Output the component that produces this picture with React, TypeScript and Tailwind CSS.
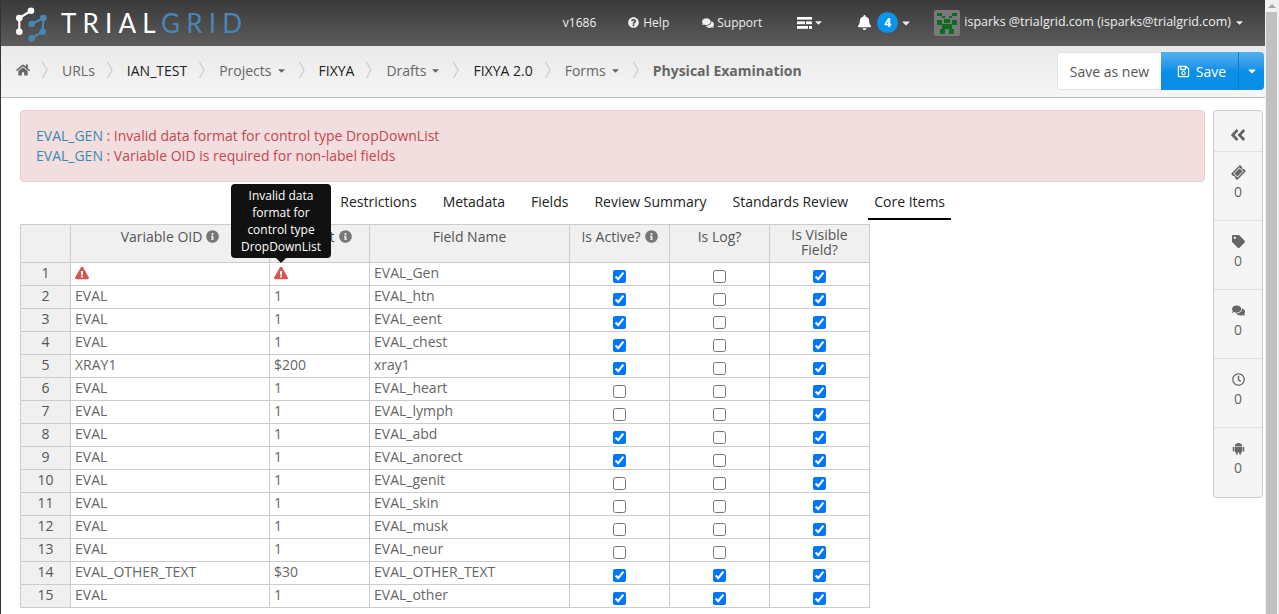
import React from "react";
import { FaHome, FaQuestionCircle, FaComments, FaBell, FaCaretDown, FaRegSave, FaAngleDoubleLeft, FaTicketAlt, FaTag, FaRegClock, FaInfoCircle, FaExclamationTriangle } from "react-icons/fa";

const Sep = () => (
  <svg width="6" height="18" viewBox="0 0 6 18" className="mx-[12px] shrink-0" aria-hidden="true">
    <polyline points="0.5,1 5,9 0.5,17" fill="none" stroke="#cfcfcf" strokeWidth="1.4" />
  </svg>
);

const Logo = () => (
  <svg width="32" height="38" viewBox="0 0 32 38" className="shrink-0" aria-hidden="true">
    <g transform="translate(-16,0)">
      <polyline points="31,6.7 19.3,14 19.3,27.7" fill="none" stroke="#fff" strokeWidth="2.2" />
      <circle cx="31" cy="6.7" r="3.3" fill="#fff" />
      <circle cx="19.3" cy="14" r="3.3" fill="#fff" />
      <circle cx="19.3" cy="27.7" r="3.3" fill="#fff" />
      <polyline points="31.7,20 43.3,14 42.7,27.7 31.7,34.3" fill="none" stroke="#4a86b4" strokeWidth="2.2" />
      <circle cx="43.3" cy="14" r="3.3" fill="#4a86b4" />
      <circle cx="31.7" cy="20" r="3.3" fill="#4a86b4" />
      <circle cx="42.7" cy="27.7" r="3.3" fill="#4a86b4" />
      <circle cx="31.7" cy="34.3" r="3.3" fill="#4a86b4" />
    </g>
  </svg>
);

const Tasks = () => (
  <svg width="15" height="12" viewBox="0 0 15 12" aria-hidden="true">
    <rect x="0" y="0" width="15" height="2.6" fill="#fff" />
    <rect x="0" y="4.4" width="8" height="2.8" fill="#fff" />
    <rect x="9" y="4.4" width="6" height="2.8" fill="#fff" />
    <rect x="0" y="9" width="11" height="2.8" fill="#fff" />
    <rect x="12" y="9" width="3" height="2.8" fill="#fff" />
  </svg>
);

const Avatar = () => (
  <svg width="26" height="26" viewBox="0 0 26 26" className="shrink-0 rounded-[2px]" aria-hidden="true">
    <rect width="26" height="26" fill="#7a7a7a" />
    <g fill="#0f6b1f">
      <rect x="3" y="3" width="5" height="3" />
      <rect x="18" y="3" width="5" height="3" />
      <rect x="8" y="6" width="3" height="2" />
      <rect x="15" y="6" width="3" height="2" />
      <rect x="3" y="10" width="5" height="5" />
      <rect x="18" y="10" width="5" height="5" />
      <rect x="10" y="9" width="6" height="4" />
      <rect x="8" y="14" width="10" height="5" />
      <rect x="6" y="19" width="5" height="5" />
      <rect x="15" y="19" width="5" height="5" />
    </g>
  </svg>
);

const Android = ({ className }: { className?: string }) => (
  <svg width="13" height="13" viewBox="0 0 14 14" className={className} fill="currentColor" aria-hidden="true">
    <path d="M3 4.6 C3 2.6 4.8 1 7 1 C9.2 1 11 2.6 11 4.6 Z" />
    <rect x="3" y="5.2" width="8" height="6" rx="0.6" />
    <rect x="0.8" y="5.2" width="1.6" height="5" rx="0.8" />
    <rect x="11.6" y="5.2" width="1.6" height="5" rx="0.8" />
    <rect x="4.4" y="10.5" width="1.7" height="3.2" rx="0.8" />
    <rect x="7.9" y="10.5" width="1.7" height="3.2" rx="0.8" />
  </svg>
);

const crumbs: { t: string; k: "link" | "dark" | "menu" }[] = [
  { t: "URLs", k: "link" },
  { t: "IAN_TEST", k: "dark" },
  { t: "Projects", k: "menu" },
  { t: "FIXYA", k: "dark" },
  { t: "Drafts", k: "menu" },
  { t: "FIXYA 2.0", k: "dark" },
  { t: "Forms", k: "menu" },
];

const rows: [string, string, string, boolean, boolean, boolean][] = [
  ["!", "!", "EVAL_Gen", true, false, true],
  ["EVAL", "1", "EVAL_htn", true, false, true],
  ["EVAL", "1", "EVAL_eent", true, false, true],
  ["EVAL", "1", "EVAL_chest", true, false, true],
  ["XRAY1", "$200", "xray1", true, false, true],
  ["EVAL", "1", "EVAL_heart", false, false, true],
  ["EVAL", "1", "EVAL_lymph", false, false, true],
  ["EVAL", "1", "EVAL_abd", true, false, true],
  ["EVAL", "1", "EVAL_anorect", true, false, true],
  ["EVAL", "1", "EVAL_genit", false, false, true],
  ["EVAL", "1", "EVAL_skin", false, false, true],
  ["EVAL", "1", "EVAL_musk", false, false, true],
  ["EVAL", "1", "EVAL_neur", false, false, true],
  ["EVAL_OTHER_TEXT", "$30", "EVAL_OTHER_TEXT", true, true, true],
  ["EVAL", "1", "EVAL_other", true, true, true],
];

const Warn = () => <FaExclamationTriangle className="text-[14px] text-[#d9534f]" />;
const Info = () => <FaInfoCircle className="inline-block text-[13px] text-[#777] ml-[4px] align-[-1px]" />;
const Check = ({ on }: { on: boolean }) => (
  <input type="checkbox" defaultChecked={on} className="block mx-auto mt-[5px] w-[13px] h-[13px]" />
);

const side = [FaTicketAlt, FaTag, FaComments, FaRegClock, Android];

export default function App() {
  return (
    <div className="flex w-[1279px] h-[614px] overflow-hidden bg-white text-[14px] text-[#333] font-['Open_Sans',sans-serif]">
      <div className="w-[1265px] shrink-0 flex flex-col border-l border-[#333] overflow-hidden">
        <header className="h-[46px] shrink-0 flex items-center justify-between pl-[15px] pr-[20px] bg-gradient-to-b from-[#3a3a3a] to-[#5c5c5c] text-[12px] text-[#eee]">
          <div className="flex items-center">
            <Logo />
            <span className="ml-[13px] text-[26px] leading-none font-normal tracking-[6.2px] font-['Lato',sans-serif]">
              <span className="text-white">TRIAL</span>
              <span className="text-[#4a86b4]">GRID</span>
            </span>
          </div>
          <div className="flex items-center mb-[1px]">
            <span>v1686</span>
            <span className="ml-[32px] flex items-center gap-[4px]"><FaQuestionCircle className="text-[11px]" />Help</span>
            <span className="ml-[33px] flex items-center gap-[3px]"><FaComments className="text-[12px]" />Support</span>
            <span className="ml-[35px] flex items-center gap-[1px]"><Tasks /><FaCaretDown className="text-[11px]" /></span>
            <span className="ml-[33px] flex items-center">
              <FaBell className="text-[15px] text-white" />
              <span className="ml-[5px] w-[21px] h-[21px] rounded-full bg-[#0a94ea] text-white font-bold text-[12px] flex items-center justify-center">4</span>
              <FaCaretDown className="ml-[2px] text-[12px]" />
            </span>
            <span className="ml-[22px] flex items-center">
              <Avatar />
              <span className="ml-[4px] text-[12.5px]">isparks @trialgrid.com (isparks@trialgrid.com)</span>
              <FaCaretDown className="ml-[3px] text-[11px]" />
            </span>
          </div>
        </header>

        <nav className="h-[52px] shrink-0 flex items-center justify-between pl-[15px] pr-[1px] border-b border-[#bbb] bg-gradient-to-b from-[#e9e9e9] to-[#f6f6f6]">
          <div className="flex items-center text-[#666] mb-[3px]">
            <FaHome className="text-[14px]" />
            {crumbs.map((c) => (
              <React.Fragment key={c.t}>
                <Sep />
                <span className={`flex items-center ml-[2px] ${c.k === "dark" ? "text-[#222]" : "text-[#666]"}`}>
                  {c.t}
                  {c.k === "menu" && <FaCaretDown className="ml-[4px] text-[11px]" />}
                </span>
              </React.Fragment>
            ))}
            <Sep />
            <span className="ml-[2px] font-bold">Physical Examination</span>
          </div>
          <div className="flex items-stretch h-[38px] -mt-[1px]">
            <span className="w-[104px] flex items-center justify-center bg-white border border-[#e4e4e4] border-r-0 rounded-l-[4px] text-[#555]">Save as new</span>
            <span className="w-[78px] pl-[4px] flex items-center justify-center gap-[6px] text-white bg-gradient-to-b from-[#52b0f0] to-[#0a8fe8] [background-size:100%_50%] bg-no-repeat bg-[#0a8fe8] border-r border-[#0a7cc9]">
              <FaRegSave className="text-[13px]" />Save
            </span>
            <span className="w-[25px] flex items-center justify-center text-white bg-gradient-to-b from-[#52b0f0] to-[#0a8fe8] [background-size:100%_50%] bg-no-repeat bg-[#0a8fe8] rounded-r-[4px]">
              <FaCaretDown className="text-[12px]" />
            </span>
          </div>
        </nav>

        <div className="flex-1 flex items-start pt-[12px] pl-[19px] min-h-0">
          <main className="w-[1185px] shrink-0">
            <div className="h-[72px] pl-[15px] pt-[15px] bg-[#f2dede] border border-[#ebccd1] rounded-[4px] leading-[20px] text-[#c4474f]">
              <div><span className="text-[#3a8bb0]">EVAL_GEN</span> : Invalid data format for control type DropDownList</div>
              <div><span className="text-[#3a8bb0]">EVAL_GEN</span> : Variable OID is required for non-label fields</div>
            </div>
            <div className="mt-[3px] mb-[4px] h-[35px] flex justify-center text-[#222]">
              {["Form", "Restrictions", "Metadata", "Fields", "Review Summary", "Standards Review", "Core Items"].map((t, i) => (
                <span key={t} className={`px-[6px] mx-[7px] h-[35px] flex items-center border-b-2 ${i === 6 ? "border-black" : "border-transparent"}`}>{t}</span>
              ))}
            </div>
            <table className="table-fixed border-collapse w-[849px] text-[#666] leading-[19px]">
              <colgroup>
                <col className="w-[50px]" />
                <col className="w-[199px]" />
                <col className="w-[100px]" />
                <col className="w-[200px]" />
                <col className="w-[100px]" />
                <col className="w-[100px]" />
                <col className="w-[100px]" />
              </colgroup>
              <thead>
                <tr className="h-[38px] bg-[#f0f0f0] text-[#555]">
                  <th className="border border-[#ccc] font-normal" />
                  <th className="border border-[#ccc] font-normal align-top pt-[2px]">Variable OID<Info /></th>
                  <th className="border border-[#ccc] font-normal align-top pt-[2px]">Format<Info /></th>
                  <th className="border border-[#ccc] font-normal align-top pt-[2px]">Field Name</th>
                  <th className="border border-[#ccc] font-normal align-top pt-[2px]">Is Active?<Info /></th>
                  <th className="border border-[#ccc] font-normal align-top pt-[2px]">Is Log?</th>
                  <th className="border border-[#ccc] font-normal align-top leading-[15px] pt-[2px]">Is Visible<br />Field?</th>
                </tr>
              </thead>
              <tbody>
                {rows.map((r, i) => (
                  <tr key={i} className="h-[23px]">
                    <td className="border border-[#ccc] bg-[#f0f0f0] text-center text-[#555] pb-[3px]">{i + 1}</td>
                    <td className="border border-[#ccc] px-[4px] pb-[3px]">{r[0] === "!" ? <Warn /> : r[0]}</td>
                    <td className="border border-[#ccc] px-[4px] pb-[3px] relative">
                      {r[1] === "!" ? (
                        <>
                          <Warn />
                          <div className="absolute left-[-39px] bottom-[27px] w-[100px] rounded-[4px] bg-[#111] text-white text-[12px] leading-[17px] text-center py-[3px]">
                            Invalid data format for control type DropDownList
                            <span className="absolute left-1/2 -ml-[5px] top-full border-x-[5px] border-t-[5px] border-x-transparent border-t-[#111]" />
                          </div>
                        </>
                      ) : r[1]}
                    </td>
                    <td className="border border-[#ccc] px-[4px] pb-[3px]">{r[2]}</td>
                    <td className="border border-[#ccc]"><Check on={r[3]} /></td>
                    <td className="border border-[#ccc]"><Check on={r[4]} /></td>
                    <td className="border border-[#ccc]"><Check on={r[5]} /></td>
                  </tr>
                ))}
              </tbody>
            </table>
          </main>
          <aside className="ml-[8px] w-[50px] shrink-0 bg-[#f5f5f5] border border-[#ccc] rounded-[4px] text-[#666] text-center">
            <div className="h-[41px] pt-[8px] border-b border-[#e0e0e0] flex items-center justify-center"><FaAngleDoubleLeft className="text-[18px]" /></div>
            {side.map((I, i) => (
              <div key={i} className={`h-[69px] pt-[14px] flex flex-col items-center ${i < 4 ? "border-b border-[#e0e0e0]" : ""}`}>
                <I className={`text-[13px] ${i === 0 ? "-rotate-45" : ""}`} />
                <span className="mt-[3px] leading-[19px]">0</span>
              </div>
            ))}
          </aside>
        </div>
      </div>
      <div className="w-[14px] shrink-0 bg-[#f1f1f1] flex flex-col items-stretch">
        <div className="h-[12px] flex items-center justify-center"><span className="border-x-[4px] border-b-[4px] border-x-transparent border-b-[#a3a3a3]" /></div>
        <div className="flex-1 ml-[1px] mr-[2px] bg-[#c1c1c1]" />
      </div>
    </div>
  );
}
